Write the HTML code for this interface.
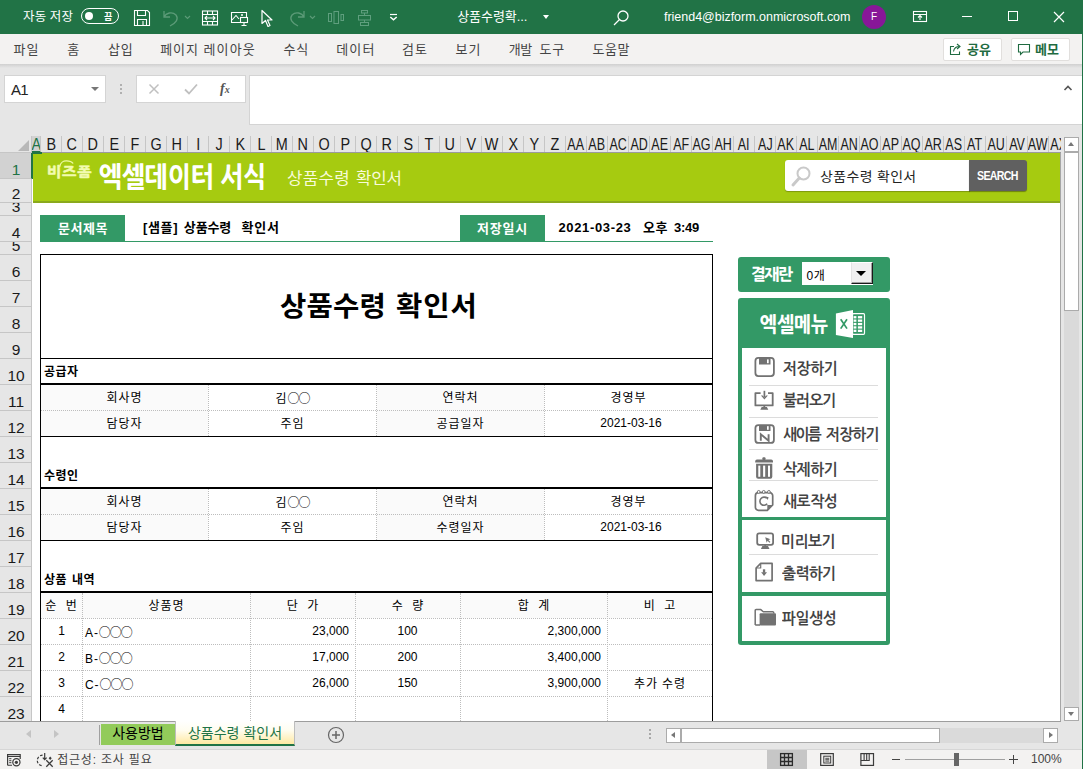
<!DOCTYPE html>
<html lang="ko"><head><meta charset="utf-8"><title>상품수령 확인서</title>
<style>
*{box-sizing:border-box;margin:0;padding:0}
html,body{width:1083px;height:769px;overflow:hidden;background:#fff}
body{font-family:"Liberation Sans","Noto Sans CJK KR",sans-serif;font-size:13px;color:#000}
#app{position:relative;width:1083px;height:769px;overflow:hidden;background:#e6e6e6}
.abs{position:absolute}
#titlebar{position:absolute;left:0;top:0;width:1083px;height:34px;background:#217346;color:#fff}
#titlebar .t{position:absolute;white-space:nowrap;font-size:13px;line-height:34px;top:0}
#ribbon{position:absolute;left:0;top:34px;width:1083px;height:30px;background:#f3f2f1}
#ribbon .tab{position:absolute;top:0;line-height:29px;font-size:13.5px;color:#444;white-space:nowrap}
#ribshadow{position:absolute;left:0;top:64px;width:1083px;height:4px;background:linear-gradient(#d0d0d0,#e6e6e6)}
.rbtn{position:absolute;top:3.500px;height:23px;background:#fff;border:1px solid #e1dfdd;border-radius:2px;font-size:13px;font-weight:bold;color:#1f6b41;line-height:21px;white-space:nowrap}
#fbar{position:absolute;left:0;top:68px;width:1083px;height:68px}
.box{position:absolute;background:#fff;border:1px solid #d4d4d4}
#colhead{position:absolute;left:0;top:136px;width:1061px;height:17px;background:#e6e6e6;overflow:hidden}
.ch{position:absolute;top:0;height:17px;line-height:18px;font-size:16px;color:#1a1a1a;text-align:center;border-right:1px solid #c6c6c6;overflow:hidden;white-space:nowrap;font-family:"Liberation Sans",sans-serif}
.ch.sel{background:#d2d2d2;color:#217346;border-bottom:2px solid #217346}
#rowhead{position:absolute;left:0;top:153px;width:32px;height:569px;background:#e6e6e6}
.rh{position:absolute;left:0;width:32px;border-bottom:1px solid #c6c6c6;border-right:1px solid #c6c6c6;font-size:15.5px;color:#1a1a1a;text-align:center;font-family:"Liberation Sans",sans-serif;overflow:hidden}
.rh span{position:absolute;left:1px;right:0;bottom:-2px;line-height:20px}
.rh.sel{background:#d2d2d2;color:#217346;border-right:1px solid #217346}
#sheet{position:absolute;left:32px;top:153px;width:1029px;height:569px;background:#fff;overflow:hidden}
#sheet .c{position:absolute;white-space:nowrap;font-size:12px;line-height:26px;text-align:center;color:#000}
.ln{position:absolute;background:#000}
.dh{position:absolute;height:0;border-top:1px dotted #bdbdbd}
.dv{position:absolute;width:0;border-left:1px dotted #bdbdbd}
#sheet2 .c{position:absolute;white-space:nowrap;font-size:12px;line-height:26px;text-align:center;color:#000;font-family:"Liberation Sans","Noto Sans CJK KR",sans-serif}
#sheet2 .c.b{font-weight:bold;letter-spacing:.4px}
#sheet2 .c{letter-spacing:.9px;line-height:28px}
#sheet2 .c.n{letter-spacing:0;line-height:27px}
.k{font-family:"Noto Sans CJK KR",sans-serif;letter-spacing:-1px}
.pk{font-family:"NanumGothic","Noto Sans CJK KR",sans-serif;font-weight:bold;white-space:nowrap;letter-spacing:-1px}
.mi{left:782px;font:bold 16px/26px "NanumGothic","Noto Sans CJK KR",sans-serif;color:#444;letter-spacing:-1.2px;white-space:nowrap}
.sep{left:749px;width:129px;height:1px;background:#dcdcdc}
.sb{background:#fff;border:1px solid #ababab}
.dd{display:inline-block;transform:scaleX(.78);transform-origin:50% 50%;margin:0 -4px}
.sd{display:inline-block;transform:scaleX(.9);transform-origin:50% 50%;margin:0 -2px}

</style></head><body>
<div id="app">
<!-- ============ SHEET ============ -->
<div id="sheetbg" class="abs" style="left:32px;top:153px;width:1029px;height:569px;background:#fff"></div>
<div id="sheet2">
<!-- banner -->
<div class="abs" style="left:33px;top:153px;width:1028px;height:49.500px;background:#a6cb10;border-bottom:2px solid #8aa91c"></div>
<svg class="abs" style="left:55px;top:156px" width="24" height="12" viewBox="55 156 24 12"><path d="M59.800 166.500C60.300 162.500 63.500 160.700 66.500 160.800C69.500 160.900 71.800 161.800 72.800 163.200" fill="none" stroke="#eefaa8" stroke-width="1.200" stroke-linecap="round"/></svg>
<div class="abs" style="left:46.8px;top:163.8px;font:800 14px/16px 'NanumGothic','Noto Sans CJK KR',sans-serif;letter-spacing:0.79px;white-space:pre;color:#f2fbb0;transform:scaleX(1.08);transform-origin:0 0;-webkit-text-stroke:.45px #f2fbb0;">비즈폼</div>
<div class="abs" style="left:98.7px;top:160.8px;font:800 28px/32px 'NanumGothic','Noto Sans CJK KR',sans-serif;letter-spacing:-0.28px;white-space:pre;color:#fff;transform:scaleX(0.88);transform-origin:0 0;">엑셀데이터 </div><div class="abs" style="left:219.6px;top:160.8px;font:800 28px/32px 'NanumGothic','Noto Sans CJK KR',sans-serif;letter-spacing:0.23px;white-space:pre;color:#fff;transform:scaleX(0.88);transform-origin:0 0;">서식</div>
<div class="abs" style="left:287.2px;top:169.0px;font:16px/20px 'Liberation Sans','Noto Sans CJK KR',sans-serif;letter-spacing:0.25px;white-space:pre;color:#f8fbd8;transform:scaleX(1.05);transform-origin:0 0;">상품수령 </div><div class="abs" style="left:356px;top:169.0px;font:16px/20px 'Liberation Sans','Noto Sans CJK KR',sans-serif;letter-spacing:-0.14px;white-space:pre;color:#f8fbd8;transform:scaleX(1.05);transform-origin:0 0;">확인서</div>
<!-- search -->
<div class="abs" style="left:785px;top:160px;width:185px;height:31px;background:#fff;border-radius:3px 0 0 3px;box-shadow:0 1px 1px rgba(0,0,0,.25)"></div>
<svg class="abs" style="left:790px;top:164px" width="24" height="24" viewBox="0 0 24 24"><circle cx="13.5" cy="9.5" r="6" fill="none" stroke="#c9c9c9" stroke-width="2"/><path d="M9.3 14 L3 21" stroke="#c9c9c9" stroke-width="3" stroke-linecap="round"/></svg>
<div class="abs" style="left:819.5px;top:168.4px;font:13px/18px 'Liberation Sans','Noto Sans CJK KR',sans-serif;letter-spacing:0.44px;white-space:pre;color:#222;transform:scaleX(1.07);transform-origin:0 0;">상품수령 </div><div class="abs" style="left:877px;top:168.4px;font:13px/18px 'Liberation Sans','Noto Sans CJK KR',sans-serif;letter-spacing:0.33px;white-space:pre;color:#222;transform:scaleX(1.07);transform-origin:0 0;">확인서</div>
<div class="abs" style="left:969px;top:160px;width:58px;height:31px;background:#606060;border-radius:0 3px 3px 0;box-shadow:0 1px 1px rgba(0,0,0,.35)"></div><div class="abs" style="left:977px;top:167.8px;font:bold 12.5px/16px 'Liberation Sans',sans-serif;letter-spacing:-0.82px;white-space:pre;color:#fff;transform:scaleX(0.85);transform-origin:0 0;">SEARCH</div>

<!-- doc title row -->
<div class="abs" style="left:40px;top:215px;width:85px;height:27px;background:#339966"></div><div class="abs" style="left:57.9px;top:220.5px;font:bold 13px/16px 'Liberation Sans','Noto Sans CJK KR',sans-serif;letter-spacing:0.57px;white-space:pre;color:#fff;">문서제목</div>
<div class="abs" style="left:40px;top:241px;width:673px;height:1px;background:#339966"></div>
<div class="abs" style="left:143px;top:219.5px;font:bold 13px/16px 'Liberation Sans','Noto Sans CJK KR',sans-serif;letter-spacing:0.63px;white-space:pre;color:#000;">[샘플] </div><div class="abs" style="left:183.8px;top:219.5px;font:bold 13px/16px 'Liberation Sans','Noto Sans CJK KR',sans-serif;letter-spacing:-0.13px;white-space:pre;color:#000;">상품수령 </div><div class="abs" style="left:241.5px;top:219.5px;font:bold 13px/16px 'Liberation Sans','Noto Sans CJK KR',sans-serif;letter-spacing:0.85px;white-space:pre;color:#000;">확인서</div>
<div class="abs" style="left:460px;top:215px;width:85px;height:27px;background:#339966"></div><div class="abs" style="left:477px;top:220.5px;font:bold 13px/16px 'Liberation Sans','Noto Sans CJK KR',sans-serif;letter-spacing:0.83px;white-space:pre;color:#fff;">저장일시</div>
<div class="abs" style="left:558.4px;top:220.1px;font:bold 13px/16px 'Liberation Sans','Noto Sans CJK KR',sans-serif;letter-spacing:0.66px;white-space:pre;color:#000;">2021-03-23</div><div class="abs" style="left:643px;top:220.2px;font:bold 13px/16px 'Liberation Sans','Noto Sans CJK KR',sans-serif;letter-spacing:0.5px;white-space:pre;color:#000;">오후</div><div class="abs" style="left:674px;top:220.1px;font:bold 13px/16px 'Liberation Sans','Noto Sans CJK KR',sans-serif;letter-spacing:-0.23px;white-space:pre;color:#000;">3:49</div>

<!-- main form -->
<div id="form">
<div class="abs" style="left:279.5px;top:291.2px;font:bold 27px/32px 'Liberation Sans','Noto Sans CJK KR',sans-serif;letter-spacing:0.16px;white-space:pre;color:#000;transform:scaleX(1.06);transform-origin:0 0;">상품수령 </div><div class="abs" style="left:395.6px;top:291.2px;font:bold 27px/32px 'Liberation Sans','Noto Sans CJK KR',sans-serif;letter-spacing:0.9px;white-space:pre;color:#000;transform:scaleX(1.06);transform-origin:0 0;">확인서</div>
<!-- outer lines -->
<div class="ln" style="left:40px;top:254px;width:673px;height:1px"></div>
<div class="ln" style="left:40px;top:254px;width:1px;height:470px"></div>
<div class="ln" style="left:712px;top:254px;width:1px;height:470px"></div>
<div class="ln" style="left:40px;top:358px;width:673px;height:1px"></div>
<div class="ln" style="left:40px;top:383px;width:673px;height:2px"></div>
<div class="ln" style="left:40px;top:436px;width:673px;height:1px"></div>
<div class="ln" style="left:40px;top:487px;width:673px;height:2px"></div>
<div class="ln" style="left:40px;top:540px;width:673px;height:1px"></div>
<div class="ln" style="left:40px;top:591px;width:673px;height:2px"></div>
<!-- shaded label cells -->
<div class="abs" style="left:41px;top:385px;width:167px;height:51px;background:#fafafa"></div>
<div class="abs" style="left:377px;top:385px;width:167px;height:51px;background:#fafafa"></div>
<div class="abs" style="left:41px;top:489px;width:167px;height:51px;background:#fafafa"></div>
<div class="abs" style="left:377px;top:489px;width:167px;height:51px;background:#fafafa"></div>
<div class="abs" style="left:41px;top:593px;width:671px;height:25px;background:#fafafa"></div>
<!-- dotted -->
<div class="dh" style="left:41px;top:410px;width:671px"></div>
<div class="dh" style="left:41px;top:514px;width:671px"></div>
<div class="dv" style="left:208px;top:385px;height:51px"></div>
<div class="dv" style="left:376px;top:385px;height:51px"></div>
<div class="dv" style="left:544px;top:385px;height:51px"></div>
<div class="dv" style="left:208px;top:489px;height:51px"></div>
<div class="dv" style="left:376px;top:489px;height:51px"></div>
<div class="dv" style="left:544px;top:489px;height:51px"></div>
<div class="dh" style="left:41px;top:618px;width:671px"></div>
<div class="dh" style="left:41px;top:644px;width:671px"></div>
<div class="dh" style="left:41px;top:670px;width:671px"></div>
<div class="dh" style="left:41px;top:696px;width:671px"></div>
<div class="dv" style="left:82px;top:593px;height:130px"></div>
<div class="dv" style="left:250px;top:593px;height:130px"></div>
<div class="dv" style="left:355px;top:593px;height:130px"></div>
<div class="dv" style="left:460px;top:593px;height:130px"></div>
<div class="dv" style="left:607px;top:593px;height:130px"></div>
<!-- text -->
<div class="c b" style="left:44px;top:358px;text-align:left">공급자</div>
<div class="c" style="left:41px;top:384px;width:167px">회사명</div>
<div class="c" style="left:209px;top:384px;width:167px">김<span class="k">○○</span></div>
<div class="c" style="left:377px;top:384px;width:167px">연락처</div>
<div class="c" style="left:545px;top:384px;width:167px">경영부</div>
<div class="c" style="left:41px;top:410px;width:167px">담당자</div>
<div class="c" style="left:209px;top:410px;width:167px">주임</div>
<div class="c" style="left:377px;top:410px;width:167px">공급일자</div>
<div class="c n" style="left:545px;top:410px;width:167px;padding-left:5px">2021-03-16</div>
<div class="c b" style="left:44px;top:462px;text-align:left">수령인</div>
<div class="c" style="left:41px;top:488px;width:167px">회사명</div>
<div class="c" style="left:209px;top:488px;width:167px">김<span class="k">○○</span></div>
<div class="c" style="left:377px;top:488px;width:167px">연락처</div>
<div class="c" style="left:545px;top:488px;width:167px">경영부</div>
<div class="c" style="left:41px;top:514px;width:167px">담당자</div>
<div class="c" style="left:209px;top:514px;width:167px">주임</div>
<div class="c" style="left:377px;top:514px;width:167px">수령일자</div>
<div class="c n" style="left:545px;top:514px;width:167px;padding-left:5px">2021-03-16</div>
<div class="c b" style="left:44px;top:566px;text-align:left;word-spacing:1.500px">상품 내역</div>
<div class="c" style="left:41px;top:592px;width:41px;white-space:pre">순  번</div>
<div class="c" style="left:83px;top:592px;width:167px">상품명</div>
<div class="c" style="left:251px;top:592px;width:104px;white-space:pre">단  가</div>
<div class="c" style="left:356px;top:592px;width:104px;white-space:pre">수  량</div>
<div class="c" style="left:461px;top:592px;width:146px;white-space:pre">합  계</div>
<div class="c" style="left:608px;top:592px;width:104px;white-space:pre">비  고</div>

<div class="c n" style="left:41px;top:618px;width:41px">1</div>
<div class="c" style="left:85px;top:618px;text-align:left;line-height:27px">A-<span class="k">○○○</span></div>
<div class="c n" style="left:251px;top:618px;width:98px;text-align:right">23,000</div>
<div class="c n" style="left:356px;top:618px;width:104px;padding-right:1px">100</div>
<div class="c n" style="left:461px;top:618px;width:140px;text-align:right">2,300,000</div>

<div class="c n" style="left:41px;top:644px;width:41px">2</div>
<div class="c" style="left:85px;top:644px;text-align:left;line-height:27px">B-<span class="k">○○○</span></div>
<div class="c n" style="left:251px;top:644px;width:98px;text-align:right">17,000</div>
<div class="c n" style="left:356px;top:644px;width:104px;padding-right:1px">200</div>
<div class="c n" style="left:461px;top:644px;width:140px;text-align:right">3,400,000</div>

<div class="c n" style="left:41px;top:670px;width:41px">3</div>
<div class="c" style="left:85px;top:670px;text-align:left;line-height:27px">C-<span class="k">○○○</span></div>
<div class="c n" style="left:251px;top:670px;width:98px;text-align:right">26,000</div>
<div class="c n" style="left:356px;top:670px;width:104px;padding-right:1px">150</div>
<div class="c n" style="left:461px;top:670px;width:140px;text-align:right">3,900,000</div>
<div class="c" style="left:608px;top:670px;width:104px">추가 수령</div>

<div class="c n" style="left:41px;top:696px;width:41px">4</div>
</div>

<!-- right panel -->
<div id="panel">
<div class="abs" style="left:738px;top:257px;width:152px;height:34.600px;background:#339966;border-radius:3px"></div>
<div class="abs" style="left:750.7px;top:264.4px;font:800 16px/20px 'NanumGothic','Noto Sans CJK KR',sans-serif;letter-spacing:-1.55px;white-space:pre;color:#fff;">결재란</div>
<div class="abs" style="left:802px;top:261.800px;width:71px;height:23.500px;background:#fff"></div>
<div class="abs" style="left:806.5px;top:268.9px;font:12px/14px 'Liberation Sans','Noto Sans CJK KR',sans-serif;letter-spacing:0.7px;white-space:pre;color:#000;">0개</div>
<div class="abs" style="left:850.500px;top:262.300px;width:22px;height:22px;background:#f0f0f0;border-right:1.500px solid #1a1a1a;border-bottom:1.500px solid #1a1a1a;border-left:1px solid #e3e3e3;border-top:1px solid #fff;box-shadow:inset -1px -1px 0 #a0a0a0"></div>
<div class="abs" style="left:856.300px;top:271px;width:0;height:0;border-left:5.200px solid transparent;border-right:5.200px solid transparent;border-top:5.800px solid #000"></div>

<div class="abs" style="left:738px;top:298px;width:152px;height:346.600px;background:#339966;border-radius:3px"></div>
<div class="abs" style="left:760.1px;top:312.7px;font:800 21px/24px 'NanumGothic','Noto Sans CJK KR',sans-serif;white-space:pre;color:#fff;transform:scaleX(0.86);transform-origin:0 0;">엑셀메뉴</div>
<svg class="abs" style="left:834px;top:308px" width="33" height="32" viewBox="834 308 33 32"><rect x="852.500" y="313.700" width="12" height="20.600" rx="1" fill="none" stroke="#fff" stroke-width="1.200"/><g fill="#fff"><rect x="853.600" y="316.100" width="2.800" height="2.300"/><rect x="853.600" y="319.500" width="2.800" height="2.300"/><rect x="853.600" y="322.900" width="2.800" height="2.300"/><rect x="853.600" y="326.300" width="2.800" height="2.300"/><rect x="853.600" y="329.700" width="2.800" height="2.300"/><rect x="857.900" y="316.100" width="4.300" height="2.300"/><rect x="857.900" y="319.500" width="4.300" height="2.300"/><rect x="857.900" y="322.900" width="4.300" height="2.300"/><rect x="857.900" y="326.300" width="4.300" height="2.300"/><rect x="857.900" y="329.700" width="4.300" height="2.300"/><path d="M835.900 313.600L853 309.900V338.100L835.900 334.900z"/></g><path d="M840.700 319.200L847 328.600M847 319.200L840.700 328.600" stroke="#339966" stroke-width="1.700"/></svg>
<div class="abs" style="left:742px;top:348px;width:144.200px;height:168.500px;background:#fff"></div>
<div class="abs" style="left:742px;top:520.400px;width:144.200px;height:71.400px;background:#fff"></div>
<div class="abs" style="left:742px;top:595.600px;width:144.200px;height:45px;background:#fff"></div>
<div class="abs sep" style="top:385px"></div>
<div class="abs sep" style="top:417px"></div>
<div class="abs sep" style="top:448.500px"></div>
<div class="abs sep" style="top:480px"></div>
<div class="abs sep" style="top:554px"></div>
<div class="abs" style="left:782.6px;top:359.0px;font:bold 16px/20px 'NanumGothic','Noto Sans CJK KR',sans-serif;letter-spacing:-0.43px;white-space:pre;color:#444;transform:scaleX(0.93);transform-origin:0 0;">저장하기</div>
<div class="abs" style="left:782.6px;top:391.4px;font:bold 16px/20px 'NanumGothic','Noto Sans CJK KR',sans-serif;letter-spacing:-0.97px;white-space:pre;color:#444;transform:scaleX(0.93);transform-origin:0 0;">불러오기</div>
<div class="abs" style="left:782.6px;top:425.2px;font:bold 16px/20px 'NanumGothic','Noto Sans CJK KR',sans-serif;letter-spacing:-1.67px;white-space:pre;color:#444;transform:scaleX(0.93);transform-origin:0 0;">새이름 </div><div class="abs" style="left:825.8px;top:425.2px;font:bold 16px/20px 'NanumGothic','Noto Sans CJK KR',sans-serif;letter-spacing:-0.86px;white-space:pre;color:#444;transform:scaleX(0.93);transform-origin:0 0;">저장하기</div>
<div class="abs" style="left:782.6px;top:459.6px;font:bold 16px/20px 'NanumGothic','Noto Sans CJK KR',sans-serif;letter-spacing:-0.43px;white-space:pre;color:#444;transform:scaleX(0.93);transform-origin:0 0;">삭제하기</div>
<div class="abs" style="left:782.6px;top:491.7px;font:bold 16px/20px 'NanumGothic','Noto Sans CJK KR',sans-serif;letter-spacing:-0.43px;white-space:pre;color:#444;transform:scaleX(0.93);transform-origin:0 0;">새로작성</div>
<div class="abs" style="left:780.8px;top:531.8px;font:bold 16px/20px 'NanumGothic','Noto Sans CJK KR',sans-serif;letter-spacing:-0.5px;white-space:pre;color:#444;transform:scaleX(0.93);transform-origin:0 0;">미리보기</div>
<div class="abs" style="left:781.8px;top:563.6px;font:bold 16px/20px 'NanumGothic','Noto Sans CJK KR',sans-serif;letter-spacing:-0.68px;white-space:pre;color:#444;transform:scaleX(0.93);transform-origin:0 0;">출력하기</div>
<div class="abs" style="left:781.8px;top:609.4px;font:bold 16px/20px 'NanumGothic','Noto Sans CJK KR',sans-serif;letter-spacing:-0.47px;white-space:pre;color:#444;transform:scaleX(0.93);transform-origin:0 0;">파일생성</div>
<!-- icons -->
<svg class="abs" style="left:0;top:0" width="1083" height="769" viewBox="0 0 1083 769">
<g fill="none" stroke="#727272" stroke-width="1.8" stroke-linejoin="round">
<rect x="755.4" y="357.9" width="18.5" height="18.2" rx="3"/>
<path d="M760.6 393.1H755.4V405.4H772.7V393.1H768"/>
<rect x="755.4" y="425.1" width="18.5" height="17.8" rx="3"/>
<path d="M760.8 440.7V434.2L768.6 440.7V434.2" stroke-width="1.9" stroke-linejoin="miter"/>
<path d="M758.4 492.7H769.7a3 3 0 0 1 3 3V505l-5.400 5.300H758.400a3 3 0 0 1-3-3V495.700a3 3 0 0 1 3-3z" stroke-width="1.700"/>
<path d="M766.900 498.300a4.100 4.100 0 1 0 .300 5.500" stroke-width="1.600"/>
<rect x="757.200" y="533.300" width="15.900" height="11.500" rx="2"/>
<path d="M760.700 563.400H772.100V580.600H756.100V568z" stroke-width="1.700"/>
<path d="M760.700 563.400V568H756.100" stroke-width="1.200"/>
<path d="M755.200 625.100V610.500a.9.900 0 0 1 .9-.900H760.800L763.300 611.800H772.800a.9.900 0 0 1 .900.900V613.400M755.200 625.100H760" stroke-width="1.500"/>
</g>
<g fill="#727272" stroke="none">
<rect x="759" y="358" width="11.500" height="6.500"/>
<rect x="763.550" y="390.800" width="1.700" height="6.500"/>
<path d="M760.900 395.500h1.800l1.700 1.900 1.700-1.900h1.800l-3.500 4z"/>
<path d="M761.700 406.900h5.200l1.400 2.900h-8z"/>
<rect x="763.400" y="405.400" width="1.800" height="2"/>
<rect x="759" y="425.400" width="11.500" height="5.600"/>
<rect x="762.400" y="457.200" width="3.100" height="3" rx="1"/>
<path d="M755.200 462.600v-1.400a1.800 1.800 0 0 1 1.800-1.800h14.200a1.800 1.800 0 0 1 1.800 1.800v1.400z"/>
<path d="M756.100 463.700h16.200v13a2 2 0 0 1-2 2h-12.200a2 2 0 0 1-2-2z"/>
<path d="M767.300 505h5.400l-5.400 5.300z"/>
<path d="M765.600 496.600l3 .6-.9 2.700z"/>
<path d="M762.400 546.100h5.600l1.500 2.900h-8.600z"/>
<rect x="764.300" y="544.800" width="1.800" height="1.600"/>
<path d="M765.200 537.200l5.300 2.100-2.100.7 2 2-.9.800-1.900-2-.9 1.900z"/>
<rect x="762.900" y="569.300" width="2.300" height="3.400"/>
<path d="M761.100 572.300h5.900l-2.950 3.600z"/>
<rect x="759.600" y="613.200" width="16.400" height="12.400" rx="1"/>
</g>
<g fill="#fff" stroke="none">
<rect x="767" y="359.400" width="1.700" height="3.800"/>
<rect x="767" y="426.200" width="1.700" height="3.600"/>
<rect x="758.300" y="465.600" width="2" height="11.200"/>
<rect x="763.100" y="465.600" width="2.100" height="11.200"/>
<rect x="768" y="465.600" width="2" height="11.200"/>
</g>
<g fill="#fff" stroke="#727272" stroke-width="1">
<circle cx="758.700" cy="491.900" r="1.400"/><circle cx="763.700" cy="491.900" r="1.400"/><circle cx="768.900" cy="491.900" r="1.400"/>
</g>
</svg>
</div>
</div>

<!-- ============ HEADERS ============ -->
<div id="colhead"><div class="ch sel" style="left:32px;width:9px"><span class="sd">A</span></div><div class="ch" style="left:41px;width:21px"><span class="sd">B</span></div><div class="ch" style="left:62px;width:21px"><span class="sd">C</span></div><div class="ch" style="left:83px;width:21px"><span class="sd">D</span></div><div class="ch" style="left:104px;width:21px"><span class="sd">E</span></div><div class="ch" style="left:125px;width:21px"><span class="sd">F</span></div><div class="ch" style="left:146px;width:21px"><span class="sd">G</span></div><div class="ch" style="left:167px;width:21px"><span class="sd">H</span></div><div class="ch" style="left:188px;width:21px"><span class="sd">I</span></div><div class="ch" style="left:209px;width:21px"><span class="sd">J</span></div><div class="ch" style="left:230px;width:21px"><span class="sd">K</span></div><div class="ch" style="left:251px;width:21px"><span class="sd">L</span></div><div class="ch" style="left:272px;width:21px"><span class="sd">M</span></div><div class="ch" style="left:293px;width:21px"><span class="sd">N</span></div><div class="ch" style="left:314px;width:21px"><span class="sd">O</span></div><div class="ch" style="left:335px;width:21px"><span class="sd">P</span></div><div class="ch" style="left:356px;width:21px"><span class="sd">Q</span></div><div class="ch" style="left:377px;width:21px"><span class="sd">R</span></div><div class="ch" style="left:398px;width:21px"><span class="sd">S</span></div><div class="ch" style="left:419px;width:21px"><span class="sd">T</span></div><div class="ch" style="left:440px;width:21px"><span class="sd">U</span></div><div class="ch" style="left:461px;width:21px"><span class="sd">V</span></div><div class="ch" style="left:482px;width:21px"><span class="sd">W</span></div><div class="ch" style="left:503px;width:21px"><span class="sd">X</span></div><div class="ch" style="left:524px;width:21px"><span class="sd">Y</span></div><div class="ch" style="left:545px;width:21px"><span class="sd">Z</span></div><div class="ch" style="left:566px;width:21px"><span class="dd">AA</span></div><div class="ch" style="left:587px;width:21px"><span class="dd">AB</span></div><div class="ch" style="left:608px;width:21px"><span class="dd">AC</span></div><div class="ch" style="left:629px;width:21px"><span class="dd">AD</span></div><div class="ch" style="left:650px;width:21px"><span class="dd">AE</span></div><div class="ch" style="left:671px;width:21px"><span class="dd">AF</span></div><div class="ch" style="left:692px;width:21px"><span class="dd">AG</span></div><div class="ch" style="left:713px;width:21px"><span class="dd">AH</span></div><div class="ch" style="left:734px;width:21px"><span class="dd">AI</span></div><div class="ch" style="left:755px;width:21px"><span class="dd">AJ</span></div><div class="ch" style="left:776px;width:21px"><span class="dd">AK</span></div><div class="ch" style="left:797px;width:21px"><span class="dd">AL</span></div><div class="ch" style="left:818px;width:21px"><span class="dd">AM</span></div><div class="ch" style="left:839px;width:21px"><span class="dd">AN</span></div><div class="ch" style="left:860px;width:21px"><span class="dd">AO</span></div><div class="ch" style="left:881px;width:21px"><span class="dd">AP</span></div><div class="ch" style="left:902px;width:21px"><span class="dd">AQ</span></div><div class="ch" style="left:923px;width:21px"><span class="dd">AR</span></div><div class="ch" style="left:944px;width:21px"><span class="dd">AS</span></div><div class="ch" style="left:965px;width:21px"><span class="dd">AT</span></div><div class="ch" style="left:986px;width:21px"><span class="dd">AU</span></div><div class="ch" style="left:1007px;width:21px"><span class="dd">AV</span></div><div class="ch" style="left:1028px;width:21px"><span class="dd">AW</span></div><div class="ch" style="left:1049px;width:21px"><span class="dd">AX</span></div></div>
<div class="abs" style="left:0;top:136px;width:32px;height:17px;background:#e6e6e6;border-right:1px solid #c6c6c6;border-bottom:1px solid #c6c6c6"></div>
<div class="abs" style="left:18px;top:140px;width:0;height:0;border-left:11px solid transparent;border-bottom:11px solid #b8b8b8"></div>
<div id="rowhead"><div class="rh sel" style="top:0px;height:26px"><span>1</span></div><div class="rh" style="top:26px;height:24px"><span>2</span></div><div class="rh" style="top:50px;height:13px"><span>3</span></div><div class="rh" style="top:63px;height:26px"><span>4</span></div><div class="rh" style="top:89px;height:13px"><span>5</span></div><div class="rh" style="top:102px;height:26px"><span>6</span></div><div class="rh" style="top:128px;height:26px"><span>7</span></div><div class="rh" style="top:154px;height:26px"><span>8</span></div><div class="rh" style="top:180px;height:26px"><span>9</span></div><div class="rh" style="top:206px;height:26px"><span>10</span></div><div class="rh" style="top:232px;height:26px"><span>11</span></div><div class="rh" style="top:258px;height:26px"><span>12</span></div><div class="rh" style="top:284px;height:26px"><span>13</span></div><div class="rh" style="top:310px;height:26px"><span>14</span></div><div class="rh" style="top:336px;height:26px"><span>15</span></div><div class="rh" style="top:362px;height:26px"><span>16</span></div><div class="rh" style="top:388px;height:26px"><span>17</span></div><div class="rh" style="top:414px;height:26px"><span>18</span></div><div class="rh" style="top:440px;height:26px"><span>19</span></div><div class="rh" style="top:466px;height:26px"><span>20</span></div><div class="rh" style="top:492px;height:26px"><span>21</span></div><div class="rh" style="top:518px;height:26px"><span>22</span></div><div class="rh" style="top:544px;height:26px"><span>23</span></div></div>
<div class="abs" style="left:32px;top:152px;width:1029px;height:1px;background:#9b9b9b"></div>
<div class="abs" style="left:32px;top:152px;width:1px;height:27px;background:#217346"></div>
<div class="abs" style="left:32px;top:152px;width:10px;height:1.500px;background:#217346"></div>

<!-- ============ V SCROLL ============ -->
<div class="abs" style="left:1061px;top:136px;width:22px;height:586px;background:#e6e6e6"></div>
<div class="abs" style="left:1060px;top:153px;width:1px;height:569px;background:#a6a6a6"></div>
<div class="abs" style="left:1064px;top:152px;width:15px;height:555px;background:#dadada"></div>
<div class="abs sb" style="left:1064px;top:152px;width:15px;height:159px"></div>
<div class="abs sb" style="left:1064px;top:137px;width:15px;height:15px"></div>
<div class="abs" style="left:1068px;top:142px;width:0;height:0;border-left:3.500px solid transparent;border-right:3.500px solid transparent;border-bottom:4px solid #777"></div>
<div class="abs sb" style="left:1064px;top:706.500px;width:15px;height:14.500px"></div>
<div class="abs" style="left:1068px;top:712px;width:0;height:0;border-left:3.500px solid transparent;border-right:3.500px solid transparent;border-top:4px solid #777"></div>

<!-- ============ SHEET TABS ============ -->
<div class="abs" style="left:0;top:721px;width:1083px;height:28px;background:#e6e6e6;border-top:1px solid #9d9d9d"></div>
<div class="abs" style="left:1061px;top:721px;width:22px;height:1px;background:#e6e6e6"></div>
<div class="abs" style="left:26px;top:730px;width:0;height:0;border-top:4px solid transparent;border-bottom:4px solid transparent;border-right:5px solid #c4c4c4"></div>
<div class="abs" style="left:54px;top:730px;width:0;height:0;border-top:4px solid transparent;border-bottom:4px solid transparent;border-left:5px solid #c4c4c4"></div>
<div class="abs" style="left:99px;top:725px;width:1px;height:20px;background:#a0a0a0"></div>
<div class="abs" style="left:101px;top:724px;width:74px;height:21px;background:#92cb5a;font:14px/19px 'Liberation Sans','Noto Sans CJK KR',sans-serif;text-align:center;color:#000">사용방법</div>
<div class="abs" style="left:175px;top:721px;width:120px;height:25px;background:linear-gradient(#fff 0%,#fffdf0 40%,#ffe9a2 100%);border-bottom:2px solid #217346;border-left:1px solid #bdbdbd;border-right:1px solid #bdbdbd;font:14px/25px 'Liberation Sans','Noto Sans CJK KR',sans-serif;text-align:center;color:#217346;white-space:nowrap">상품수령 확인서</div>
<svg class="abs" style="left:327px;top:726px" width="18" height="18" viewBox="0 0 18 18"><circle cx="9" cy="9" r="7.500" fill="none" stroke="#666" stroke-width="1.200"/><path d="M9 5v8M5 9h8" stroke="#666" stroke-width="1.500"/></svg>
<div class="abs" style="left:649px;top:729px;width:2px;height:2px;background:#a8a8a8;box-shadow:0 4px #a8a8a8,0 8px #a8a8a8"></div>
<div class="abs" style="left:666px;top:728px;width:392px;height:15px;background:#dadada"></div>
<div class="abs sb" style="left:666px;top:728px;width:15px;height:15px"></div>
<div class="abs" style="left:671px;top:732px;width:0;height:0;border-top:3.500px solid transparent;border-bottom:3.500px solid transparent;border-right:4px solid #777"></div>
<div class="abs sb" style="left:681px;top:728px;width:259px;height:15px"></div>
<div class="abs sb" style="left:1043px;top:728px;width:15px;height:15px"></div>
<div class="abs" style="left:1049px;top:732px;width:0;height:0;border-top:3.500px solid transparent;border-bottom:3.500px solid transparent;border-left:4px solid #777"></div>

<!-- ============ STATUS BAR ============ -->
<div class="abs" style="left:0;top:749px;width:1083px;height:20px;background:#f3f2f1;border-top:1px solid #d6d6d6"></div>
<svg class="abs" style="left:5px;top:752px" width="18" height="16" viewBox="5 752 18 16"><path d="M7.600 765.200V754.700H20.200V759" fill="none" stroke="#3b3b3b" stroke-width="1.200"/><path d="M7.600 756.500H20.200M7.600 765.200H12" stroke="#3b3b3b" stroke-width="1.100"/><path d="M9.200 758.700h2.200M9.200 760.700h2.200M9.200 762.700h2.200" stroke="#3b3b3b" stroke-width="1"/><circle cx="16.400" cy="762.300" r="3.600" fill="#f3f2f1" stroke="#3b3b3b" stroke-width="1.200"/><circle cx="16.400" cy="762.300" r="1.600" fill="#3b3b3b"/></svg>
<svg class="abs" style="left:36px;top:751px" width="19" height="18" viewBox="36 751 19 18"><path d="M42.600 755.200A5.300 5.300 0 0 0 42.600 765.800" fill="none" stroke="#3b3b3b" stroke-width="1.200" stroke-dasharray="2.600 1.600"/><path d="M44.700 753v6.500M42.800 757.600l1.900 2.100 1.900-2.100" fill="none" stroke="#3b3b3b" stroke-width="1.200"/><path d="M50.200 756.600l1.500 1.700-1.500 1.700-1.500-1.700z" fill="#3b3b3b"/><path d="M46.300 760.300l6.400 6.400M52.700 760.300l-6.400 6.400" stroke="#3b3b3b" stroke-width="1.300"/></svg>
<div class="abs" style="left:57.2px;top:752.4px;font:12px/16px 'Liberation Sans','Noto Sans CJK KR',sans-serif;letter-spacing:0.8px;white-space:pre;color:#444;">접근성: 조사 필요</div>
<div class="abs" style="left:767px;top:750px;width:40px;height:19px;background:#c6c6c6"></div>
<svg class="abs" style="left:779px;top:752px" width="16" height="16" viewBox="779 752 16 16"><rect x="780.600" y="753.600" width="11.800" height="11.800" fill="none" stroke="#2b2b2b" stroke-width="1.300"/><path d="M780.600 757.500h11.800M780.600 761.500h11.800M784.500 753.600v11.800M788.500 753.600v11.800" stroke="#2b2b2b" stroke-width="1.300"/></svg>
<svg class="abs" style="left:819px;top:752px" width="16" height="16" viewBox="819 752 16 16"><rect x="820.700" y="753.600" width="12.600" height="11.800" fill="none" stroke="#3b3b3b" stroke-width="1.200"/><rect x="823.800" y="756.200" width="6.900" height="6.800" fill="none" stroke="#3b3b3b" stroke-width="1"/><path d="M825.300 758.300h4M825.300 759.700h4M825.300 761.100h4" stroke="#3b3b3b" stroke-width=".9"/></svg>
<svg class="abs" style="left:859px;top:752px" width="16" height="16" viewBox="859 752 16 16"><rect x="860.900" y="753.600" width="12.600" height="11.800" fill="none" stroke="#3b3b3b" stroke-width="1.200"/><path d="M860.900 760.500h8.300v-6.900M864.100 753.600v6.500M866.700 753.600v6.500" fill="none" stroke="#3b3b3b" stroke-width="1.100"/></svg>
<div class="abs" style="left:892px;top:759px;width:8px;height:1px;background:#444"></div>
<div class="abs" style="left:905px;top:759px;width:100px;height:1px;background:#a0a0a0"></div>
<div class="abs" style="left:954px;top:753px;width:5px;height:13px;background:#666"></div>
<div class="abs" style="left:1009px;top:759px;width:9px;height:1px;background:#444"></div>
<div class="abs" style="left:1013px;top:755px;width:1px;height:9px;background:#444"></div>
<div class="abs" style="left:1031px;top:749px;font:12px/21px 'Liberation Sans',sans-serif;color:#444">100%</div>

<!-- ============ FORMULA BAR ============ -->
<div id="fbar">
<div class="box" style="left:4px;top:7px;width:102px;height:28px"></div>
<div class="abs" style="left:11px;top:7px;font:15px/29px 'Liberation Sans',sans-serif;color:#222;letter-spacing:-.8px">A1</div>
<div class="abs" style="left:91px;top:19px;width:0;height:0;border-left:4px solid transparent;border-right:4px solid transparent;border-top:4px solid #777"></div>
<div class="abs" style="left:120px;top:16px;width:2px;height:2px;background:#b0b0b0;box-shadow:0 4px #b0b0b0,0 8px #b0b0b0"></div>
<div class="box" style="left:136px;top:7px;width:110px;height:28px"></div>
<svg class="abs" style="left:148px;top:15px" width="12" height="12" viewBox="0 0 12 12"><path d="M1.500 1.500l9 9M10.500 1.500l-9 9" stroke="#c0c0c0" stroke-width="1.500"/></svg>
<svg class="abs" style="left:184px;top:15px" width="14" height="12" viewBox="0 0 14 12"><path d="M1 6.500l4 4L13 1.500" fill="none" stroke="#c0c0c0" stroke-width="1.800"/></svg>
<div class="abs" style="left:220px;top:8px;font:italic bold 14px/26px 'Liberation Serif',serif;color:#555">f<span style="font-size:10px">x</span></div>
<div class="box" style="left:249px;top:7px;width:841px;height:50px"></div>
<svg class="abs" style="left:1063px;top:16px" width="10" height="8" viewBox="0 0 10 8"><path d="M1.500 6L5 2.500 8.500 6" fill="none" stroke="#555" stroke-width="1.600"/></svg>
</div>

<!-- ============ RIBBON ============ -->
<div id="ribbon">
<div class="rbtn" style="left:942.500px;width:59px;padding-left:23.500px">공유</div>
<svg class="abs" style="left:949px;top:9px" width="14" height="13" viewBox="0 0 14 13"><path d="M5 3.500H1.500v8h9V8.500" fill="none" stroke="#1f6b41" stroke-width="1.100"/><path d="M4.500 8.500c.5-3 2.500-5 6-5M8 1l3 2.500L8 6" fill="none" stroke="#1f6b41" stroke-width="1.100"/></svg>
<div class="rbtn" style="left:1010.500px;width:59px;padding-left:23.500px">메모</div>
<svg class="abs" style="left:1017px;top:9px" width="14" height="13" viewBox="0 0 14 13"><path d="M1.500 1.500h11v7.500H6L3.500 11.500V9h-2z" fill="none" stroke="#1f6b41" stroke-width="1.100"/></svg>
</div>
<div id="ribshadow"></div>
<div class="abs" style="left:13.5px;top:41.8px;font:13px/16px 'Liberation Sans','Noto Sans CJK KR',sans-serif;letter-spacing:1.0px;white-space:pre;color:#444;">파일</div><div class="abs" style="left:67.3px;top:41.8px;font:13px/16px 'Liberation Sans','Noto Sans CJK KR',sans-serif;white-space:pre;color:#444;">홈</div><div class="abs" style="left:107.9px;top:41.8px;font:13px/16px 'Liberation Sans','Noto Sans CJK KR',sans-serif;letter-spacing:1.0px;white-space:pre;color:#444;">삽입</div><div class="abs" style="left:160.3px;top:41.8px;font:13px/16px 'Liberation Sans','Noto Sans CJK KR',sans-serif;letter-spacing:0.85px;white-space:pre;color:#444;">페이지 </div><div class="abs" style="left:203.4px;top:41.8px;font:13px/16px 'Liberation Sans','Noto Sans CJK KR',sans-serif;letter-spacing:1.2px;white-space:pre;color:#444;">레이아웃</div><div class="abs" style="left:283.4px;top:41.8px;font:13px/16px 'Liberation Sans','Noto Sans CJK KR',sans-serif;letter-spacing:1.0px;white-space:pre;color:#444;">수식</div><div class="abs" style="left:336.3px;top:41.8px;font:13px/16px 'Liberation Sans','Noto Sans CJK KR',sans-serif;letter-spacing:1.1px;white-space:pre;color:#444;">데이터</div><div class="abs" style="left:402.0px;top:41.8px;font:13px/16px 'Liberation Sans','Noto Sans CJK KR',sans-serif;letter-spacing:1.0px;white-space:pre;color:#444;">검토</div><div class="abs" style="left:455.5px;top:41.8px;font:13px/16px 'Liberation Sans','Noto Sans CJK KR',sans-serif;letter-spacing:1.0px;white-space:pre;color:#444;">보기</div><div class="abs" style="left:508.8px;top:41.8px;font:13px/16px 'Liberation Sans','Noto Sans CJK KR',sans-serif;letter-spacing:-0.5px;white-space:pre;color:#444;">개발 </div><div class="abs" style="left:539.4px;top:41.8px;font:13px/16px 'Liberation Sans','Noto Sans CJK KR',sans-serif;letter-spacing:0.8px;white-space:pre;color:#444;">도구</div><div class="abs" style="left:592.4px;top:41.8px;font:13px/16px 'Liberation Sans','Noto Sans CJK KR',sans-serif;letter-spacing:0.65px;white-space:pre;color:#444;">도움말</div>

<div class="abs" style="left:1082px;top:34px;width:1px;height:735px;background:#217346"></div>
<!-- ============ TITLE BAR ============ -->
<div id="titlebar">
<div class="abs" style="left:81px;top:8px;width:38px;height:16px;border:1px solid #fff;border-radius:8px"></div>
<div class="abs" style="left:85px;top:12px;width:8px;height:8px;border-radius:4px;background:#fff"></div>
<div class="abs" style="left:104px;top:8.500px;font:bold 9px/16px 'Liberation Sans','Noto Sans CJK KR',sans-serif;color:#fff">끔</div>
<svg class="abs" style="left:133px;top:9px" width="18" height="18" viewBox="0 0 18 18"><path d="M1.500 1.500h13l2 2v13h-15z" fill="none" stroke="#fff" stroke-width="1.100"/><path d="M4.500 1.500v5h8v-5M4.500 16.500v-6h9v6M10 16v-4" fill="none" stroke="#fff" stroke-width="1.100"/></svg>
<svg class="abs" style="left:162px;top:9px" width="30" height="18" viewBox="0 0 30 18"><path d="M2 2v6h6M2 8c2-4 8-6 12-2 3 4 0 8-6 11" fill="none" stroke="#5c9b78" stroke-width="1.300"/><path d="M23 7l2.500 2.500L28 7" fill="none" stroke="#5c9b78" stroke-width="1.100"/></svg>
<svg class="abs" style="left:201px;top:9px" width="18" height="18" viewBox="0 0 18 18"><rect x="1.500" y="2" width="15" height="14" fill="none" stroke="#fff" stroke-width="1.100"/><path d="M1.500 5.500h15M1.500 12.500h15M6.500 2v3.500M11.500 2v3.500M6.500 12.500V16M11.500 12.500V16M4 9h10M6 7L4 9l2 2M12 7l2 2-2 2" fill="none" stroke="#fff" stroke-width="1.100"/></svg>
<svg class="abs" style="left:230px;top:9px" width="19" height="18" viewBox="0 0 19 18"><path d="M10 13.500H1.500v-10h15V8" fill="none" stroke="#fff" stroke-width="1.100"/><path d="M2 11l4-4.500L9 10" fill="none" stroke="#fff" stroke-width="1.100"/><rect x="10.500" y="8.500" width="7" height="5" fill="none" stroke="#fff" stroke-width="1.100"/><path d="M14 13.500v3M11.500 16.500h5" stroke="#fff" stroke-width="1.100"/><circle cx="12" cy="6" r="1" fill="#fff"/></svg>
<svg class="abs" style="left:260px;top:9px" width="14" height="19" viewBox="0 0 14 19"><path d="M2 1.500v13l3.500-3 2.500 6 2-1-2.500-5.500h4.500z" fill="none" stroke="#fff" stroke-width="1.200" stroke-linejoin="round"/></svg>
<svg class="abs" style="left:288px;top:9px" width="30" height="18" viewBox="0 0 30 18"><path d="M16 2v6h-6M16 8c-2-4-8-6-12-2-3 4 0 8 6 11" fill="none" stroke="#5c9b78" stroke-width="1.300"/><path d="M22 7l2.500 2.500L27 7" fill="none" stroke="#5c9b78" stroke-width="1.100"/></svg>
<svg class="abs" style="left:326px;top:9px" width="20" height="18" viewBox="326 9 20 18"><g fill="none" stroke="#5f9f7e" stroke-width="1"><rect x="328.500" y="13.500" width="3" height="8"/><rect x="334" y="11.500" width="4.500" height="12"/><rect x="341" y="14.500" width="2.500" height="6"/></g></svg>
<svg class="abs" style="left:356px;top:9px" width="18" height="18" viewBox="356 9 18 18"><g fill="none" stroke="#5f9f7e" stroke-width="1"><rect x="361.500" y="10.500" width="6" height="2.500"/><rect x="358.500" y="15.500" width="12" height="4.500"/><rect x="360.500" y="22.500" width="8" height="3"/><path d="M364.500 13v2.500M364.500 20v2.500"/></g></svg>
<svg class="abs" style="left:388px;top:12px" width="12" height="10" viewBox="388 12 12 10"><path d="M390 14.500h7" stroke="#fff" stroke-width="1.200"/><path d="M390.300 17l3.200 2.800 3.200-2.800" fill="none" stroke="#fff" stroke-width="1.500"/></svg>
<div class="abs" style="left:543px;top:15px;width:0;height:0;border-left:3.500px solid transparent;border-right:3.500px solid transparent;border-top:4px solid #fff"></div>
<svg class="abs" style="left:612px;top:9px" width="18" height="18" viewBox="0 0 18 18"><circle cx="11" cy="7" r="5" fill="none" stroke="#fff" stroke-width="1.300"/><path d="M7.500 10.500L2 16" stroke="#fff" stroke-width="1.300"/></svg>
<div class="abs" style="left:862px;top:5px;width:24px;height:24px;border-radius:12px;background:#881798;color:#fff;font:10px/24px 'Liberation Sans',sans-serif;text-align:center">F</div>
<svg class="abs" style="left:912px;top:10px" width="16" height="14" viewBox="0 0 16 14"><rect x="1.500" y="1.500" width="13" height="10" fill="none" stroke="#fff" stroke-width="1.100"/><path d="M1.500 4.500h13M8 10V6M6 7.500L8 5.500l2 2" fill="none" stroke="#fff" stroke-width="1.100"/></svg>
<div class="abs" style="left:962px;top:16px;width:10px;height:1px;background:#fff"></div>
<div class="abs" style="left:1008px;top:11px;width:10px;height:10px;border:1px solid #fff"></div>
<svg class="abs" style="left:1053px;top:11px" width="12" height="12" viewBox="0 0 12 12"><path d="M1 1l10 10M11 1L1 11" stroke="#fff" stroke-width="1.200"/></svg>
</div>
<div class="abs" style="left:23.1px;top:9.4px;font:12.5px/16px 'Liberation Sans','Noto Sans CJK KR',sans-serif;letter-spacing:0.08px;white-space:pre;color:#fff;">자동 저장</div><div class="abs" style="left:457.2px;top:8.9px;font:13px/16px 'Liberation Sans','Noto Sans CJK KR',sans-serif;letter-spacing:-0.06px;white-space:pre;color:#fff;">상품수령확...</div><div class="abs" style="left:664px;top:9.0px;font:12.5px/16px 'Liberation Sans','Noto Sans CJK KR',sans-serif;letter-spacing:-0.02px;white-space:pre;color:#fff;">friend4@bizform.onmicrosoft.com</div>

</div>
</body></html>
